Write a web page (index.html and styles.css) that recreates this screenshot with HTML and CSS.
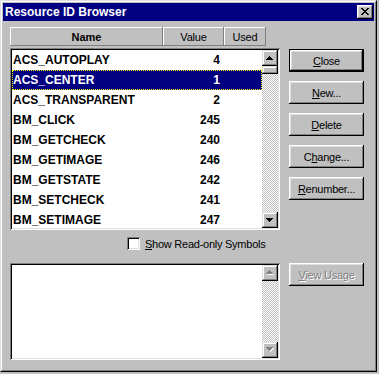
FILE: index.html
```html
<!DOCTYPE html>
<html>
<head>
<meta charset="utf-8">
<title>Resource ID Browser</title>
<link rel="stylesheet" href="styles.css">
</head>
<body>
<div class="window">
  <div class="frame">
    <div class="caption">
      <span class="title">Resource ID Browser</span>
      <span class="cap-btn">
        <svg width="8" height="7" viewBox="0 0 8 7"><path fill="#000" d="M0 0h2v1h1v1h2V1h1V0h2v1H7v1H6v1H5v1h1v1h1v1h1v1H6V6H5V5H3v1H2v1H0V6h1V5h1V4h1V3H2V2H1V1H0z"/></svg>
      </span>
    </div>
    <div class="body">
      <div class="left">
        <div class="header">
          <div class="hcell hname">Name</div>
          <div class="hcell hvalue">Value</div>
          <div class="hcell hused">Used</div>
        </div>
        <div class="listbox main-list">
          <div class="items">
            <div class="row"><span class="n">ACS_AUTOPLAY</span><span class="v">4</span></div>
            <div class="row sel"><span class="n">ACS_CENTER</span><span class="v">1</span></div>
            <div class="row"><span class="n">ACS_TRANSPARENT</span><span class="v">2</span></div>
            <div class="row"><span class="n">BM_CLICK</span><span class="v">245</span></div>
            <div class="row"><span class="n">BM_GETCHECK</span><span class="v">240</span></div>
            <div class="row"><span class="n">BM_GETIMAGE</span><span class="v">246</span></div>
            <div class="row"><span class="n">BM_GETSTATE</span><span class="v">242</span></div>
            <div class="row"><span class="n">BM_SETCHECK</span><span class="v">241</span></div>
            <div class="row"><span class="n">BM_SETIMAGE</span><span class="v">247</span></div>
          </div>
          <div class="vscroll">
            <div class="sbtn"><svg width="7" height="4" viewBox="0 0 7 4"><path fill="#000" d="M3 0h1v1h1v1h1v1h1v1H0V3h1V2h1V1h1z"/></svg></div>
            <div class="track"><div class="thumb"></div></div>
            <div class="sbtn"><svg width="7" height="4" viewBox="0 0 7 4"><path fill="#000" d="M0 0h7v1H6v1H5v1H4v1H3V3H2V2H1V1H0z"/></svg></div>
          </div>
        </div>
        <div class="check">
          <span class="box"></span>
          <span class="label"><u>S</u>how Read-only Symbols</span>
        </div>
        <div class="listbox usage-list">
          <div class="items"></div>
          <div class="vscroll">
            <div class="sbtn"><svg width="8" height="5" viewBox="0 0 8 5"><path fill="#fff" d="M4 1h1v1h1v1h1v1h1v1H1V4h1V3h1V2h1z"/><path fill="#808080" d="M3 0h1v1h1v1h1v1h1v1H0V3h1V2h1V1h1z"/></svg></div>
            <div class="track"></div>
            <div class="sbtn"><svg width="8" height="5" viewBox="0 0 8 5"><path fill="#fff" d="M1 1h7v1H7v1H6v1H5v1H4V4H3V3H2V2H1z"/><path fill="#808080" d="M0 0h7v1H6v1H5v1H4v1H3V3H2V2H1V1H0z"/></svg></div>
          </div>
        </div>
      </div>
      <div class="right">
        <div class="btn default"><span><u>C</u>lose</span></div>
        <div class="btn"><span><u>N</u>ew...</span></div>
        <div class="btn"><span><u>D</u>elete</span></div>
        <div class="btn"><span>C<u>h</u>ange...</span></div>
        <div class="btn"><span><u>R</u>enumber...</span></div>
        <div class="btn disabled view"><span><u>V</u>iew Usage</span></div>
      </div>
    </div>
  </div>
</div>
</body>
</html>
```

FILE: styles.css
```css
* { box-sizing: border-box; }
html, body { margin: 0; padding: 0; }
body {
  background: #c0c0c0;
  width: 379px;
  height: 374px;
  overflow: hidden;
  font-family: "Liberation Sans", Arial, sans-serif;
  font-size: 11px;
  color: #000;
}
.window {
  width: 377px;
  height: 372px;
  border: 1px solid;
  border-color: #dfdfdf #000 #000 #dfdfdf;
  background: #c0c0c0;
}
.frame {
  height: 100%;
  border: 1px solid;
  border-color: #fff #808080 #808080 #fff;
  padding: 1px;
  display: flex;
  flex-direction: column;
}
.caption {
  height: 18px;
  flex: none;
  background: #000080;
  display: flex;
  align-items: center;
  justify-content: space-between;
  padding: 0 1px 0 2px;
}
.title {
  color: #fff;
  font-weight: bold;
  font-size: 12px;
  line-height: 14px;
}
.cap-btn {
  width: 16px;
  height: 14px;
  background: #c0c0c0;
  box-shadow: inset -1px -1px #000, inset 1px 1px #fff, inset -2px -2px #808080, inset 2px 2px #dfdfdf;
  display: flex;
  align-items: center;
  justify-content: center;
  padding: 0 1px 1px 0;
}
.cap-btn svg { display: block; }
.body {
  flex: 1;
  display: flex;
  padding: 6px 0 0 7px;
}
.left {
  width: 270px;
  display: flex;
  flex-direction: column;
}
.header {
  display: flex;
  height: 19px;
  width: 256px;
}
.hcell {
  height: 19px;
  display: flex;
  align-items: center;
  justify-content: center;
  box-shadow: inset -1px -1px #808080, inset 1px 1px #fff;
  letter-spacing: -0.2px;
}
.hname { width: 153px; font-weight: bold; letter-spacing: 0; }
.hvalue { width: 61px; }
.hused { width: 42px; }

.listbox {
  display: flex;
  padding: 2px;
  background: #c0c0c0;
  box-shadow: inset 1px 1px #808080, inset -1px -1px #fff, inset 2px 2px #000, inset -2px -2px #dfdfdf;
}
.main-list { margin-top: 2px; height: 182px; }
.usage-list { margin-top: 13px; height: 97px; }
.items {
  width: 250px;
  background: #fff;
  overflow: hidden;
}
.row {
  height: 20px;
  display: flex;
  align-items: center;
  font-weight: bold;
  font-size: 12px;
  white-space: nowrap;
}
.row .n { width: 150px; padding-left: 1px; }
.row .v { width: 60px; text-align: right; padding-right: 2px; }
.row.sel {
  background: #000080;
  color: #fff;
  outline: 1px dotted #ff0;
  outline-offset: -1px;
}
.vscroll {
  width: 16px;
  display: flex;
  flex-direction: column;
}
.sbtn {
  width: 16px;
  height: 16px;
  flex: none;
  background: #c0c0c0;
  box-shadow: inset -1px -1px #000, inset 1px 1px #dfdfdf, inset -2px -2px #808080, inset 2px 2px #fff;
  display: flex;
  align-items: center;
  justify-content: center;
  padding: 0 1px 1px 0;
}
.sbtn svg { display: block; }
.track {
  flex: 1;
  background: repeating-conic-gradient(#fff 0 25%, #c0c0c0 0 50%) 0 0 / 2px 2px;
}
.thumb {
  height: 8px;
  background: #c0c0c0;
  box-shadow: inset -1px -1px #000, inset 1px 1px #dfdfdf, inset -2px -2px #808080, inset 2px 2px #fff;
}
.check {
  margin-top: 7px;
  height: 13px;
  display: flex;
  align-items: center;
  padding-left: 117px;
}
.box {
  width: 13px;
  height: 13px;
  flex: none;
  background: #fff;
  box-shadow: inset 1px 1px #808080, inset -1px -1px #fff, inset 2px 2px #000, inset -2px -2px #dfdfdf;
  margin-right: 5px;
}
.label {
  letter-spacing: -0.25px;
  white-space: nowrap;
}
.right {
  width: 75px;
  margin-left: 9px;
  display: flex;
  flex-direction: column;
  padding-top: 22px;
}
.btn {
  width: 75px;
  height: 23px;
  flex: none;
  margin-bottom: 9px;
  display: flex;
  align-items: center;
  justify-content: center;
  background: #c0c0c0;
  box-shadow: inset -1px -1px #000, inset 1px 1px #fff, inset -2px -2px #808080, inset 2px 2px #dfdfdf;
  letter-spacing: -0.25px;
  white-space: nowrap;
}
.btn.default {
  box-shadow: inset 0 0 0 1px #000, inset -2px -2px #000, inset 2px 2px #fff, inset -3px -3px #808080, inset 3px 3px #dfdfdf;
}
.btn.view { margin-top: 54px; }
.btn.disabled {
  color: #808080;
  text-shadow: 1px 1px 0 #fff;
}
```
